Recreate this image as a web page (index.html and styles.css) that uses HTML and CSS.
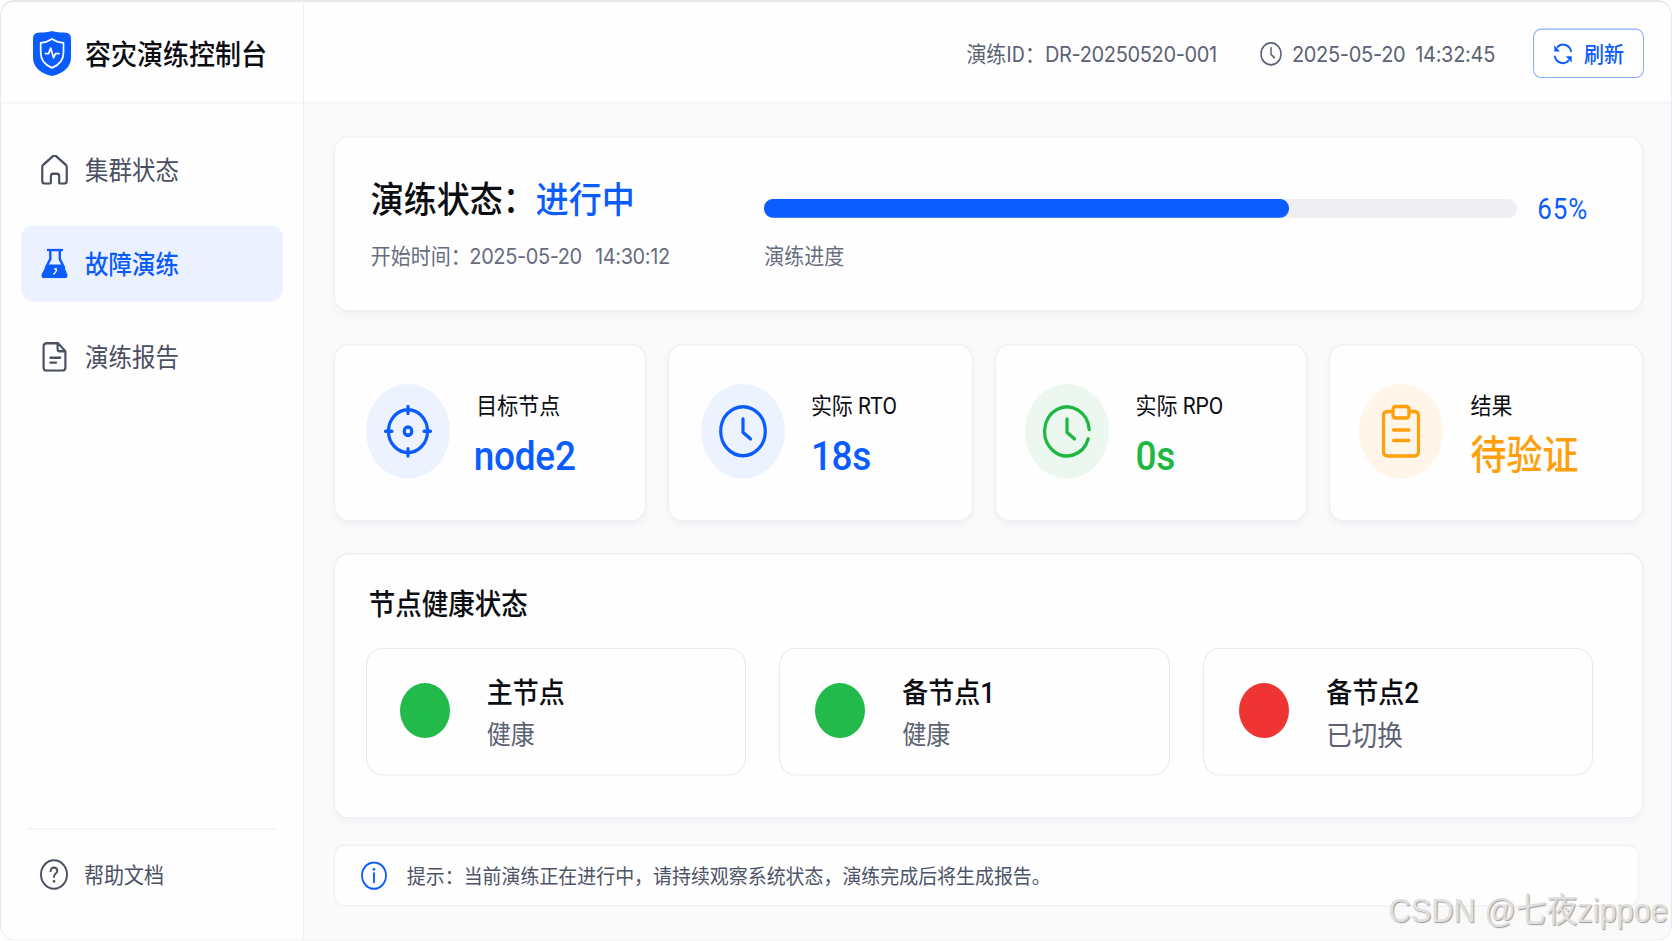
FILE: index.html
```html
<!DOCTYPE html>
<html lang="zh-CN">

<head>
	<meta charset="UTF-8">
	<title>容灾演练控制台</title>
	<link rel="stylesheet" href="styles.css">
</head>

<body>
	<div class="app">

		<!-- サイドバー -->
		<aside class="sidebar">
			<div class="brand">
				<svg class="logo" viewBox="0 0 38 41">
					<path d="M19 0C20.500 1.200 25 1.500 33 1.800Q38 2.200 38 7V24C38 35 27 39.500 19 41C11 39.500 0 35 0 24V7Q0 2.200 5 1.800C13 1.500 17.500 1.200 19 0Z" fill="#0b5cff"/>
					<path d="M19 7.500Q24 10.600 30.500 11V20C30.500 27 25 31.500 19 33.800C13 31.500 7.700 27 7.700 20V11Q14 10.600 19 7.500Z" fill="none" stroke="#fff" stroke-width="1.700" stroke-linejoin="round"/>
					<path d="M12.500 20.700H15.500L17.700 15.800L20.500 24.500L22.500 20.700H26" fill="none" stroke="#fff" stroke-width="1.700" stroke-linecap="round" stroke-linejoin="round"/>
				</svg>
				<h1>容灾演练控制台</h1>
			</div>

			<nav class="menu">
				<a class="menu-item">
					<svg viewBox="0 0 26 26">
						<path d="M1.200 10.500Q1.200 9.300 2.200 8.400L11.400 1Q13 -.2 14.600 1L23.800 8.400Q24.800 9.300 24.800 10.500V22.500Q24.800 25 22.300 25H18.500Q17.500 25 17.500 24V18.500Q17.500 16.300 15.300 16.300H11.700Q9.500 16.300 9.500 18.500V24Q9.500 25 8.500 25H3.700Q1.200 25 1.200 22.500Z" fill="none" stroke="currentColor" stroke-width="2.100"/>
					</svg>
					<span>集群状态</span>
				</a>
				<a class="menu-item active">
					<svg viewBox="0 0 26 27">
						<path d="M6.500 1.300H20.500M8.800 1.500V9.500L4.500 17M18.300 1.500V9.500L22.500 17" fill="none" stroke="currentColor" stroke-width="2.400" stroke-linecap="round"/>
						<path d="M5.300 14.500H21.700L25.600 22.800Q27 27 23.300 27H3Q-1 27 .4 22.800Z" fill="currentColor"/>
						<path d="M12.800 18.800L14.600 18.300L14.900 20Q14 22.500 11.800 23.400" fill="none" stroke="#fff" stroke-width="1.300"/>
					</svg>
					<span>故障演练</span>
				</a>
				<a class="menu-item">
					<svg viewBox="0 0 26 26">
						<path d="M5.500 1H16.500L23.500 8V22Q23.500 25 20.500 25H5.500Q2.500 25 2.500 22V4Q2.500 1 5.500 1ZM16 1.500V6Q16 8 18 8H23" fill="none" stroke="currentColor" stroke-width="2.100" stroke-linejoin="round"/>
						<path d="M9 13.700H18.500M9 18H14.500" fill="none" stroke="currentColor" stroke-width="2" stroke-linecap="round"/>
					</svg>
					<span>演练报告</span>
				</a>
			</nav>

			<div class="help">
				<svg viewBox="0 0 28 28">
					<circle cx="14" cy="14" r="13" fill="none" stroke="currentColor" stroke-width="1.900"/>
					<path d="M10.600 11Q10.800 7.600 14 7.600Q17.300 7.700 17.300 10.700Q17.200 12.300 15.400 13.500Q14 14.400 14 16.300" fill="none" stroke="currentColor" stroke-width="1.900" stroke-linecap="round"/>
					<circle cx="14" cy="20.200" r="1.300" fill="currentColor"/>
				</svg>
				<span>帮助文档</span>
			</div>
		</aside>

		<div class="content">
			<!-- ヘッダー -->
			<header class="topbar">
				<div class="drill-id">演练ID：<span class="num">DR-20250520-001</span></div>
				<div class="clock">
					<svg viewBox="0 0 22 22">
						<circle cx="11" cy="11" r="10" fill="none" stroke="currentColor" stroke-width="1.500"/>
						<path d="M11 5.500V11.500L14.500 14.500" fill="none" stroke="currentColor" stroke-width="1.500" stroke-linecap="round"/>
					</svg>
					<span class="num">2025-05-20 14:32:45</span>
				</div>
				<button class="refresh">
					<svg viewBox="0 0 20 20">
						<path d="M4 4.200A8.400 8.400 0 0 1 18.300 8.300M16 15.800A8.400 8.400 0 0 1 1.700 11.700" fill="none" stroke="currentColor" stroke-width="1.800"/>
						<path d="M1.300 2.200V7.800H7L5 5.700L3 3.900ZM18.700 18V12.200H13L15 14.300L17 16.300Z" fill="currentColor"/>
					</svg>
					<span>刷新</span>
				</button>
			</header>

			<main>
				<!-- 進捗 -->
				<section class="card status">
					<div class="status-text">
						<h2>演练状态：<em>进行中</em></h2>
						<p>开始时间：<span class="num">2025-05-20 14:30:12</span></p>
					</div>
					<div class="progress">
						<div class="progress-row">
							<div class="bar"><div class="bar-fill"></div></div>
							<span class="percent">65%</span>
						</div>
						<p>演练进度</p>
					</div>
				</section>

				<!-- 指標 -->
				<section class="metrics">
					<div class="card metric blue">
						<div class="icon">
							<svg viewBox="0 0 50 50">
								<circle cx="25" cy="25" r="19.500"/>
								<circle cx="25" cy="25" r="3.800"/>
								<path d="M25 2.500V9M25 41V47.500M2.500 25H9M41 25H47.500"/>
							</svg>
						</div>
						<div class="metric-text">
							<p class="label">目标节点</p>
							<p class="value node-name">node2</p>
						</div>
					</div>
					<div class="card metric blue">
						<div class="icon">
							<svg viewBox="0 0 50 50">
								<circle cx="25" cy="25" r="22.300"/>
								<path d="M25 14V26L32.500 32"/>
							</svg>
						</div>
						<div class="metric-text">
							<p class="label">实际 RTO</p>
							<p class="value">18s</p>
						</div>
					</div>
					<div class="card metric green">
						<div class="icon">
							<svg viewBox="0 0 50 50">
								<path d="M47.200 23.500A22.300 22.300 0 1 0 46.200 32"/>
								<path d="M25 14V26L32.500 32"/>
							</svg>
						</div>
						<div class="metric-text">
							<p class="label">实际 RPO</p>
							<p class="value">0s</p>
						</div>
					</div>
					<div class="card metric orange">
						<div class="icon">
							<svg viewBox="0 0 50 50">
								<path d="M17 7H11.500Q7.500 7 7.500 11V43.500Q7.500 47.500 11.500 47.500H38.500Q42.500 47.500 42.500 43.500V11Q42.500 7 38.500 7H33"/>
								<path d="M20 2.500H30Q33 2.500 33 5.500V10Q33 13 30 13H20Q17 13 17 10V5.500Q17 2.500 20 2.500ZM17.500 24H33M17.500 33.500H33"/>
							</svg>
						</div>
						<div class="metric-text">
							<p class="label">结果</p>
							<p class="value cjk">待验证</p>
						</div>
					</div>
				</section>

				<!-- ノード一覧 -->
				<section class="card health">
					<h3>节点健康状态</h3>
					<div class="nodes">
						<div class="node primary">
							<i class="dot"></i>
							<div>
								<p class="name">主节点</p>
								<p class="state">健康</p>
							</div>
						</div>
						<div class="node">
							<i class="dot"></i>
							<div>
								<p class="name">备节点1</p>
								<p class="state">健康</p>
							</div>
						</div>
						<div class="node">
							<i class="dot down"></i>
							<div>
								<p class="name">备节点2</p>
								<p class="state switched">已切换</p>
							</div>
						</div>
					</div>
				</section>

				<section class="tip">
					<svg viewBox="0 0 26 26">
						<circle cx="13" cy="13" r="12" fill="none" stroke="currentColor" stroke-width="1.800"/>
						<path d="M13 11V19" stroke="currentColor" stroke-width="1.900" stroke-linecap="round"/>
						<circle cx="13" cy="7.300" r="1.300" fill="currentColor"/>
					</svg>
					<span>提示：当前演练正在进行中，请持续观察系统状态，演练完成后将生成报告。</span>
				</section>
			</main>
		</div>

		<div class="watermark">CSDN @七夜zippoe</div>
	</div>
</body>

</html>
```

FILE: styles.css
```css
* {
	margin     : 0;
	padding    : 0;
	box-sizing : border-box;
}
body {
	width      : 1672px;
	height     : 941px;
	overflow   : hidden;
	background : #fff;
	color      : #0b0d12;
	font-family: Roboto, "Noto Sans CJK SC", sans-serif;
}
svg {
	display     : block;
	flex-shrink : 0;
}

/* 縦方向だけ1.1倍に伸ばす */
.app {
	display  : flex;
	position : relative;
	width    : 1672px;
	height   : 855.45px;

	border        : solid 1px #e6e9ef;
	border-top    : solid 2px #e6eaef;
	border-radius : 14px;
	overflow      : hidden;

	transform        : scaleY(1.1);
	transform-origin : 0 0;
}
.num {
	font-family    : Inter, sans-serif;
	letter-spacing : -0.3px;
	word-spacing   : 3.5px;
}

/* sidebar */
.sidebar {
	display        : flex;
	flex-direction : column;
	width          : 303px;
	border-right   : solid 1px #eceef2;
	background     : #fefefe;
}
.brand {
	display       : flex;
	align-items   : center;
	gap           : 14px;
	height        : 92px;
	padding       : 2px 0 0 32px;
	border-bottom : solid 1.5px #eff0f4;
}
.logo {
	width  : 38px;
	height : 41px;
}
.brand h1 {
	padding-top : 2px;
	font-size   : 26px;
	font-weight : 500;
	line-height : 36px;
}
.menu {
	display        : flex;
	flex-direction : column;
	gap            : 16.4px;
	flex           : 1;
	padding        : 25.2px 20px 0 19.5px;
}
.menu-item {
	display       : flex;
	align-items   : center;
	gap           : 17.5px;
	height        : 69px;
	padding-left  : 20px;
	border-radius : 12px;
	color         : #4a5062;
	font-size     : 23.5px;
}
.menu-item svg {
	width      : 27px;
	height     : 27px;
	margin-top : 1px;
}
.menu-item.active {
	background  : #ebf1fe;
	color       : #0b5cff;
	font-weight : 500;
}
.help {
	display     : flex;
	align-items : center;
	gap         : 16px;
	height      : 101px;
	margin      : 0 27px 0 26px;
	padding     : 0 0 19px 13px;
	border-top  : solid 1px #eceef2;
	color       : #4a5062;
	font-size   : 20px;
}
.help svg {
	width  : 28px;
	height : 28px;
}

/* header */
.content {
	flex       : 1;
	background : #fafafb;
}
.topbar {
	display         : flex;
	align-items     : center;
	justify-content : flex-end;
	height          : 92px;
	padding         : 2px 27px 0 0;
	border-bottom   : solid 1.5px #eff0f4;
	background      : #fefefe;
	color           : #5c6274;
	font-size       : 20px;
}
.drill-id {
	margin-top : -2px;
}
.drill-id .num {
	letter-spacing : -0.35px;
}
.clock {
	display     : flex;
	align-items : center;
	gap         : 9.5px;
	margin      : 0 38px 0 43.5px;
}
.clock svg {
	width  : 22px;
	height : 22px;
}
.clock .num {
	margin-top   : 1px;
	word-spacing : 4.5px;
}
.refresh {
	display         : flex;
	align-items     : center;
	justify-content : center;
	gap             : 11px;
	width           : 111px;
	height          : 45.5px;
	border          : solid 1.5px #86adff;
	border-radius   : 8px;
	background      : #fff;
	color           : #0b5cff;
	font            : 500 20px Roboto, "Noto Sans CJK SC", sans-serif;
}
.refresh svg {
	width  : 20px;
	height : 20px;
}
.refresh span {
	margin-top : -3px;
}

/* main */
main {
	padding : 30px 28px 0 30px;
}
.card {
	border        : solid 1px #ecedf2;
	border-radius : 14px;
	background    : #fefefe;
	box-shadow    : 0 3px 8px rgba(30, 40, 80, .035);
}
.status {
	display : flex;
	height  : 159px;
	padding : 32px 54px 0 36px;
}
.status-text {
	width : 393.500px;
}
.status h2 {
	height      : 48px;
	padding-top : 1.8px;
	font-size   : 33px;
	font-weight : 500;
	line-height : 48px;
}
.status em {
	color      : #0b5cff;
	font-style : normal;
}
.status p {
	margin-top  : 13px;
	color       : #676c7e;
	font-size   : 20px;
	line-height : 30px;
}
.status .num {
	margin-left    : -1.5px;
	letter-spacing : -0.4px;
	word-spacing   : 8px;
}
.progress {
	flex : 1;
}
.progress-row {
	display     : flex;
	align-items : center;
	gap         : 20px;
	height      : 48px;
	padding-top : 17px;
}
.bar {
	width         : 753px;
	height        : 17.6px;
	border-radius : 9px;
	background    : #eeeef3;
}
.bar-fill {
	width         : 69.7%;
	height        : 100%;
	border-radius : 9px;
	background    : #0b5cff;
}
.percent {
	color          : #0b5cff;
	font-size      : 26px;
	letter-spacing : .8px;
}

.metrics {
	display               : grid;
	grid-template-columns : 312.500px 304.500px 312px 314px;
	justify-content       : space-between;
	margin                : 29.8px 0 28.5px;
}
.metric {
	display        : flex;
	align-items    : center;
	gap            : 26px;
	height         : 161.4px;
	padding-left   : 31.500px;
	padding-bottom : 2px;
}
.metric.green, .metric.orange {
	padding-left : 29.5px;
}
.metric.orange {
	gap : 27px;
}
.metric-text {
	margin-top : 15.5px;
}
.icon {
	display         : flex;
	align-items     : center;
	justify-content : center;
	width           : 84px;
	height          : 86px;
	border-radius   : 50%;
}
.icon svg {
	width  : 50px;
	height : 50px;
	fill   : none;
	stroke : currentColor;
	stroke-width    : 3.2;
	stroke-linecap  : round;
	stroke-linejoin : round;
}
.label {
	margin-top  : -1px;
	font-size   : 21px;
	line-height : 30px;
}
.value {
	font-size   : 37px;
	font-weight : 500;
	line-height : 62px;
	height      : 61px;
	letter-spacing : -.3px;
}
.value.node-name {
	margin-left : -2.5px;
}
.value.cjk {
	font-size   : 36px;
	line-height : 60px;
	letter-spacing : 0;
}
.blue .icon,  .blue .value   { color: #0b5cff; }
.green .icon, .green .value  { color: #1db744; }
.orange .icon, .orange .value { color: #ff9f0a; }
.blue .icon   { background: #edf3fe; }
.green .icon  { background: #ecf8ef; }
.orange .icon { background: #fff6e9; }

.health {
	height  : 241px;
	padding : 27px 0 0 31px;
}
.health h3 {
	padding-left : 3px;
	font-size    : 26.500px;
	font-weight  : 500;
	line-height  : 38px;
}
.nodes {
	display               : grid;
	grid-template-columns : 380px 391px 390px;
	gap                   : 33px;
	margin-top            : 20px;
}
.node {
	display       : flex;
	align-items   : center;
	gap           : 37px;
	height        : 116.4px;
	padding-left  : 35.5px;
	border        : solid 1px #e9eaf0;
	border-radius : 16px;
}
.node.primary {
	padding-left : 33px;
}
.dot {
	width         : 50px;
	height        : 50px;
	margin-bottom : 2px;
	border-radius : 50%;
	background    : #21ba4b;
}
.dot.down {
	background : #ef3434;
}
.name {
	padding-top : 1.5px;
	font-size   : 26px;
	font-weight : 500;
	line-height : 38px;
}
.state {
	height      : 36px;
	padding-top : 1px;
	color       : #5c6274;
	font-size   : 24px;
	line-height : 36px;
}
.state.switched {
	padding-top : 2px;
	font-size   : 25.5px;
}

.tip {
	display       : flex;
	align-items   : center;
	gap           : 20px;
	width         : 1305px;
	height        : 56px;
	margin-top    : 24px;
	padding-left  : 26px;
	border        : solid 1px #eeeff3;
	border-radius : 10px;
	background    : #fefefe;
	color         : #4e5467;
	font-size     : 18.95px;
}
.tip svg {
	width  : 26px;
	height : 26px;
	color  : #0b5cff;
}
.tip span {
	margin-top : -1px;
}

.watermark {
	position    : absolute;
	right       : 3px;
	bottom      : 8px;
	color       : #e0e0e0;
	font        : 30.8px "Liberation Sans", "Noto Sans CJK SC", sans-serif;
	line-height : 36px;
	text-shadow : 1px 1px 1px #9c9c9c;
}
```
